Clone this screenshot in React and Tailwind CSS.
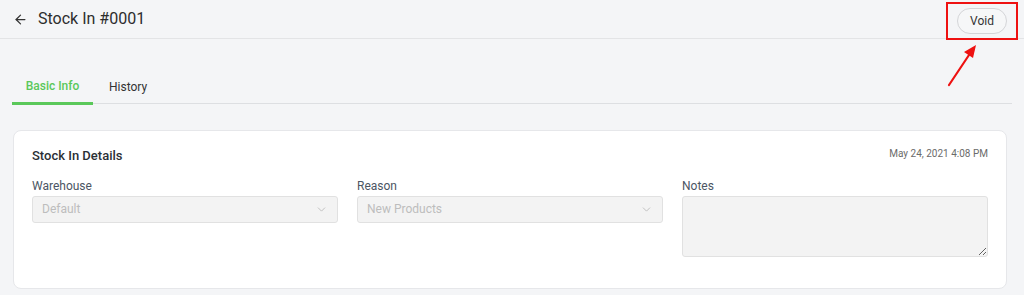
import React from 'react';
import { ArrowLeft, ChevronDown } from 'lucide-react';

const SelectBox = ({ label, value }) => (
    <div className="flex flex-col">
        <label className="text-[12px] leading-[14px] text-[#4b5563] mb-[3px]">{label}</label>
        <div className="h-[27px] flex items-center justify-between px-[9px] bg-[#f3f3f3] border border-[#e1e1e1] rounded-[3px]">
            <span className="text-[12px] text-[#bdbdbd]">{value}</span>
            <ChevronDown size={13} strokeWidth={1.5} className="text-[#b5b5b5]" />
        </div>
    </div>
);

const App = () => {
    return (
        <div className="w-[1024px] h-[295px] overflow-hidden bg-[#f4f5f7] text-[#333]" style={{ fontFamily: 'Roboto, "Liberation Sans", sans-serif' }}>
            <header className="relative h-[39px] flex items-center justify-between border-b border-[#e3e4e6] pl-[13px] pr-[6px]">
                <div className="flex items-center gap-[10px]">
                    <ArrowLeft size={15} strokeWidth={2} className="text-[#333]" />
                    <h1 className="text-[16px] text-[#2d2d2d]">Stock In #0001</h1>
                </div>
                <div className="border-2 border-[#ee1111] w-[72px] h-[38px] flex items-center justify-center mt-[4px]">
                    <button className="h-[26px] w-[50px] rounded-full border border-[#d4d5d8] bg-[#f6f7f8] text-[12px] text-[#333]">Void</button>
                </div>
                <svg className="absolute left-[944px] top-[40px]" width="36" height="50" viewBox="0 0 36 50">
                    <line x1="5" y1="45" x2="27" y2="12" stroke="#ee1111" strokeWidth="2.2" strokeLinecap="round" />
                    <polygon points="32,5 20,12 29,18" fill="#ee1111" />
                </svg>
            </header>

            <nav className="mt-[35px] mx-[12px] flex border-b border-[#dddfe2] h-[30px]">
                <div className="w-[81px] flex justify-center border-b-[3px] border-[#5ac85a] -mb-[2px]">
                    <span className="text-[12px] font-medium text-[#5ac85a] pt-[3px]">Basic Info</span>
                </div>
                <div className="px-[16px]">
                    <span className="text-[12px] text-[#333] pt-[3px] inline-block">History</span>
                </div>
            </nav>

            <section className="mt-[26px] mx-[13px] w-[994px] h-[159px] bg-white rounded-[8px] border border-[#e6e7ea] px-[18px] pt-[13px]">
                <div className="flex items-start justify-between">
                    <h2 className="text-[13px] font-medium text-[#2b3035] mt-[2px]">Stock In Details</h2>
                    <span className="text-[10px] text-[#6b6b6b] mt-[2px]">May 24, 2021 4:08 PM</span>
                </div>
                <div className="grid grid-cols-3 gap-[19px] mt-[13px]">
                    <SelectBox label="Warehouse" value="Default" />
                    <SelectBox label="Reason" value="New Products" />
                    <div className="flex flex-col">
                        <label className="text-[12px] leading-[14px] text-[#4b5563] mb-[3px]">Notes</label>
                        <textarea disabled className="h-[61px] bg-[#f3f3f3] border border-[#e1e1e1] rounded-[3px]" />
                    </div>
                </div>
            </section>
        </div>
    );
};

export default App;
